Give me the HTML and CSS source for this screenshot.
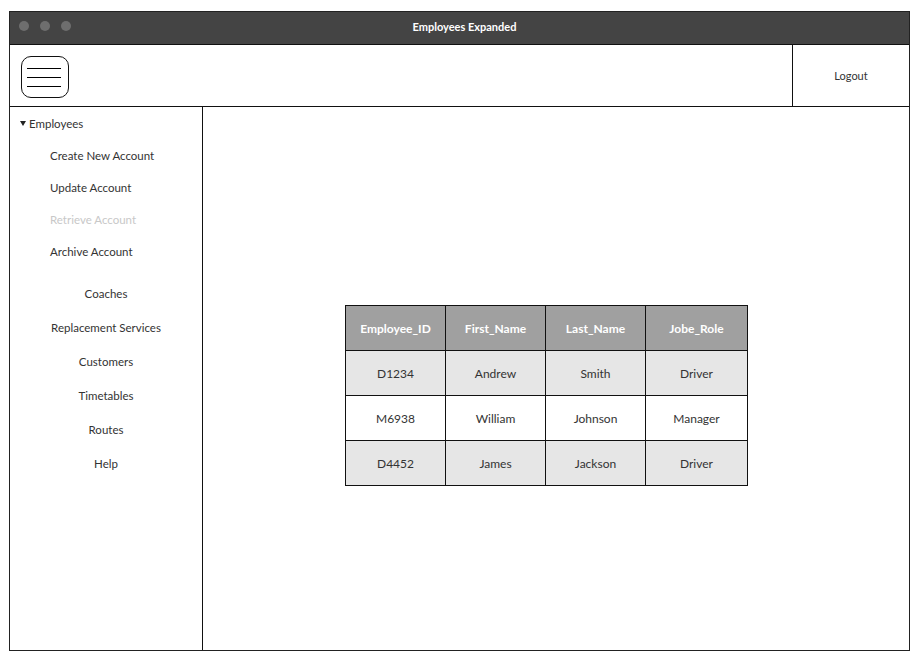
FILE: index.html
```html
<!DOCTYPE html>
<html>
<head>
<meta charset="utf-8">
<title>Employees Expanded</title>
<link rel="stylesheet" href="styles.css">
</head>
<body>
<div class="window">
  <div class="titlebar">
    <div class="dots"><span class="dot"></span><span class="dot"></span><span class="dot"></span></div>
    <div class="title">Employees Expanded</div>
  </div>
  <div class="header">
    <div class="header-left">
      <div class="burger">
        <svg width="48" height="42" viewBox="0 0 48 42">
          <line x1="6" y1="12.5" x2="40" y2="12.5" stroke="#000" stroke-width="1.2"/>
          <line x1="6" y1="21.5" x2="40" y2="21.5" stroke="#000" stroke-width="1.2"/>
          <line x1="6" y1="30.5" x2="40" y2="30.5" stroke="#000" stroke-width="1.2"/>
        </svg>
      </div>
    </div>
    <div class="logout">Logout</div>
  </div>
  <div class="body">
    <nav class="sidebar">
      <div class="group"><span class="caret"></span>Employees</div>
      <div class="sub">Create New Account</div>
      <div class="sub">Update Account</div>
      <div class="sub disabled">Retrieve Account</div>
      <div class="sub">Archive Account</div>
      <div class="menu">
        <div class="item">Coaches</div>
        <div class="item">Replacement Services</div>
        <div class="item">Customers</div>
        <div class="item">Timetables</div>
        <div class="item">Routes</div>
        <div class="item">Help</div>
      </div>
    </nav>
    <main class="main">
      <table class="grid">
        <thead>
          <tr><th>Employee_ID</th><th>First_Name</th><th>Last_Name</th><th class="wide">Jobe_Role</th></tr>
        </thead>
        <tbody>
          <tr class="shade"><td>D1234</td><td>Andrew</td><td>Smith</td><td>Driver</td></tr>
          <tr><td>M6938</td><td>William</td><td>Johnson</td><td>Manager</td></tr>
          <tr class="shade"><td>D4452</td><td>James</td><td>Jackson</td><td>Driver</td></tr>
        </tbody>
      </table>
    </main>
  </div>
</div>
</body>
</html>
```

FILE: styles.css
```css
* { box-sizing: border-box; }
html, body { margin: 0; padding: 0; background: #fff; }
body {
  font-family: Lato, "Open Sans", sans-serif;
  font-size: 11px;
  color: #333;
}
.window {
  margin: 11px 0 0 9px;
  width: 901px;
  height: 640px;
  border: 1px solid #222;
  display: flex;
  flex-direction: column;
}
.titlebar {
  height: 33px;
  background: #444;
  border-bottom: 1px solid #111;
  position: relative;
  display: flex;
  align-items: center;
  justify-content: center;
  padding-bottom: 3px;
}
.dots {
  position: absolute;
  left: 9px;
  top: 9px;
  display: flex;
  gap: 11px;
}
.dot {
  width: 10px;
  height: 10px;
  border-radius: 50%;
  background: #6e6e6e;
}
.title {
  color: #fff;
  font-weight: bold;
  font-size: 11px;
  margin-left: 10px;
}
.header {
  height: 62px;
  border-bottom: 1px solid #111;
  display: flex;
}
.header-left {
  flex: 1;
  padding: 11px 0 0 11px;
}
.burger {
  width: 48px;
  height: 42px;
  border: 1px solid #111;
  border-radius: 10px;
  position: relative;
}
.burger svg { position: absolute; left: -1px; top: -1px; }
.logout {
  width: 117px;
  border-left: 1px solid #111;
  display: flex;
  align-items: center;
  justify-content: center;
  color: #333;
}
.body {
  flex: 1;
  display: flex;
}
.sidebar {
  width: 193px;
  border-right: 1px solid #111;
  color: #333;
  font-size: 11.5px;
}
.group {
  height: 32px;
  display: flex;
  align-items: center;
  padding-left: 10px;
}
.caret {
  width: 0;
  height: 0;
  border-left: 3.5px solid transparent;
  border-right: 3.5px solid transparent;
  border-top: 5px solid #222;
  margin-right: 3px;
}
.sub {
  height: 32px;
  display: flex;
  align-items: center;
  padding-left: 40px;
}
.sub.disabled { color: #c8c8c8; }
.menu { padding-top: 9px; }
.item {
  height: 34px;
  display: flex;
  align-items: center;
  justify-content: center;
}
.main {
  flex: 1;
  padding: 198px 0 0 142px;
}
.grid {
  border-collapse: collapse;
  table-layout: fixed;
  width: 403px;
  font-size: 12px;
}
.grid th, .grid td {
  width: 100px;
  height: 45px;
  border: 1px solid #111;
  text-align: center;
  padding: 0;
  color: #333;
}
.grid th.wide { width: 102px; }
.grid th {
  background: #a0a0a0;
  color: #fff;
  font-weight: bold;
}
.grid tr.shade td { background: #e6e6e6; }
```
